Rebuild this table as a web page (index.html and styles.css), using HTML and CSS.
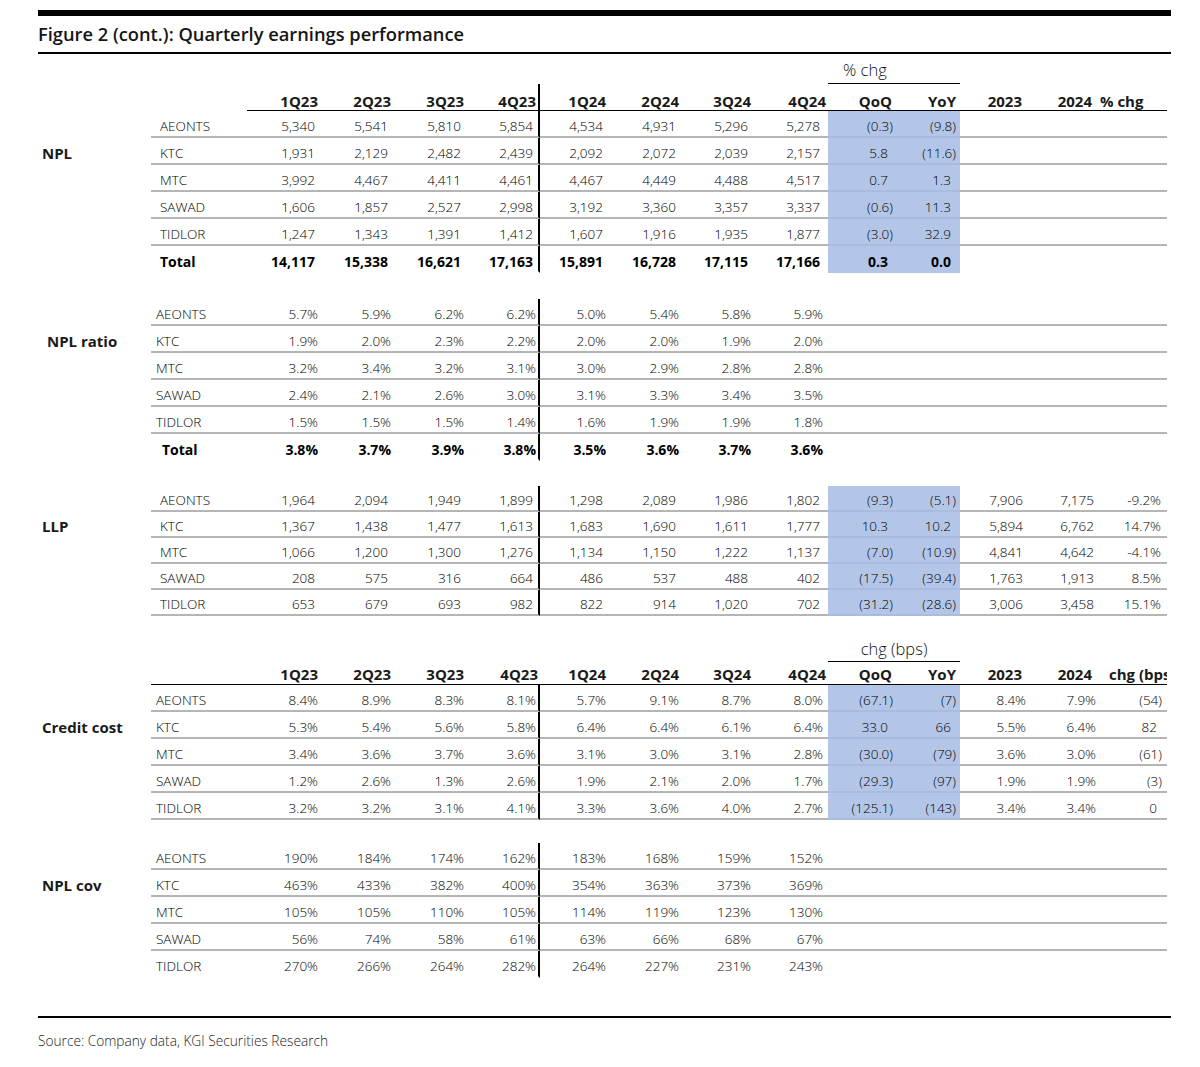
FILE: index.html
```html
<!DOCTYPE html>
<html lang="en">
<head>
<meta charset="utf-8">
<title>Figure 2 (cont.): Quarterly earnings performance</title>
<link rel="stylesheet" href="styles.css">
</head>
<body>
<div class="page">
  <div class="topbar"></div>
  <h1 class="title">Figure 2 (cont.): Quarterly earnings performance</h1>

  <section class="sec npl vsec blue">
    <div class="row sp"><span class="sup">% chg</span></div>
    <div class="row hd vh">
      <span></span><span></span><span>1Q23</span><span>2Q23</span><span>3Q23</span><span>4Q23</span><span>1Q24</span><span>2Q24</span><span>3Q24</span><span>4Q24</span><span>QoQ</span><span>YoY</span><span>2023</span><span>2024</span><span class="lc">% chg</span>
    </div>
    <div class="row d"><span></span><span>AEONTS</span><span>5,340</span><span>5,541</span><span>5,810</span><span>5,854</span><span>4,534</span><span>4,931</span><span>5,296</span><span>5,278</span><span>(0.3)</span><span>(9.8)</span><span></span><span></span><span></span></div>
    <div class="row d"><span>NPL</span><span>KTC</span><span>1,931</span><span>2,129</span><span>2,482</span><span>2,439</span><span>2,092</span><span>2,072</span><span>2,039</span><span>2,157</span><span class="po">5.8</span><span>(11.6)</span><span></span><span></span><span></span></div>
    <div class="row d"><span></span><span>MTC</span><span>3,992</span><span>4,467</span><span>4,411</span><span>4,461</span><span>4,467</span><span>4,449</span><span>4,488</span><span>4,517</span><span class="po">0.7</span><span class="po">1.3</span><span></span><span></span><span></span></div>
    <div class="row d"><span></span><span>SAWAD</span><span>1,606</span><span>1,857</span><span>2,527</span><span>2,998</span><span>3,192</span><span>3,360</span><span>3,357</span><span>3,337</span><span>(0.6)</span><span class="po">11.3</span><span></span><span></span><span></span></div>
    <div class="row d"><span></span><span>TIDLOR</span><span>1,247</span><span>1,343</span><span>1,391</span><span>1,412</span><span>1,607</span><span>1,916</span><span>1,935</span><span>1,877</span><span>(3.0)</span><span class="po">32.9</span><span></span><span></span><span></span></div>
    <div class="row d tot"><span></span><span>Total</span><span>14,117</span><span>15,338</span><span>16,621</span><span>17,163</span><span>15,891</span><span>16,728</span><span>17,115</span><span>17,166</span><span class="po">0.3</span><span class="po">0.0</span><span></span><span></span><span></span></div>
  </section>

  <section class="sec ratio vsec pct">
    <div class="row d"><span></span><span>AEONTS</span><span>5.7%</span><span>5.9%</span><span>6.2%</span><span>6.2%</span><span>5.0%</span><span>5.4%</span><span>5.8%</span><span>5.9%</span><span></span><span></span><span></span><span></span><span></span></div>
    <div class="row d"><span class="ind">NPL ratio</span><span>KTC</span><span>1.9%</span><span>2.0%</span><span>2.3%</span><span>2.2%</span><span>2.0%</span><span>2.0%</span><span>1.9%</span><span>2.0%</span><span></span><span></span><span></span><span></span><span></span></div>
    <div class="row d"><span></span><span>MTC</span><span>3.2%</span><span>3.4%</span><span>3.2%</span><span>3.1%</span><span>3.0%</span><span>2.9%</span><span>2.8%</span><span>2.8%</span><span></span><span></span><span></span><span></span><span></span></div>
    <div class="row d"><span></span><span>SAWAD</span><span>2.4%</span><span>2.1%</span><span>2.6%</span><span>3.0%</span><span>3.1%</span><span>3.3%</span><span>3.4%</span><span>3.5%</span><span></span><span></span><span></span><span></span><span></span></div>
    <div class="row d"><span></span><span>TIDLOR</span><span>1.5%</span><span>1.5%</span><span>1.5%</span><span>1.4%</span><span>1.6%</span><span>1.9%</span><span>1.9%</span><span>1.8%</span><span></span><span></span><span></span><span></span><span></span></div>
    <div class="row d tot"><span></span><span class="tind">Total</span><span>3.8%</span><span>3.7%</span><span>3.9%</span><span>3.8%</span><span>3.5%</span><span>3.6%</span><span>3.7%</span><span>3.6%</span><span></span><span></span><span></span><span></span><span></span></div>
  </section>

  <section class="sec llp vsec blue">
    <div class="row d"><span></span><span>AEONTS</span><span>1,964</span><span>2,094</span><span>1,949</span><span>1,899</span><span>1,298</span><span>2,089</span><span>1,986</span><span>1,802</span><span>(9.3)</span><span>(5.1)</span><span>7,906</span><span>7,175</span><span>-9.2%</span></div>
    <div class="row d"><span>LLP</span><span>KTC</span><span>1,367</span><span>1,438</span><span>1,477</span><span>1,613</span><span>1,683</span><span>1,690</span><span>1,611</span><span>1,777</span><span class="po">10.3</span><span class="po">10.2</span><span>5,894</span><span>6,762</span><span>14.7%</span></div>
    <div class="row d"><span></span><span>MTC</span><span>1,066</span><span>1,200</span><span>1,300</span><span>1,276</span><span>1,134</span><span>1,150</span><span>1,222</span><span>1,137</span><span>(7.0)</span><span>(10.9)</span><span>4,841</span><span>4,642</span><span>-4.1%</span></div>
    <div class="row d"><span></span><span>SAWAD</span><span>208</span><span>575</span><span>316</span><span>664</span><span>486</span><span>537</span><span>488</span><span>402</span><span>(17.5)</span><span>(39.4)</span><span>1,763</span><span>1,913</span><span>8.5%</span></div>
    <div class="row d"><span></span><span>TIDLOR</span><span>653</span><span>679</span><span>693</span><span>982</span><span>822</span><span>914</span><span>1,020</span><span>702</span><span>(31.2)</span><span>(28.6)</span><span>3,006</span><span>3,458</span><span>15.1%</span></div>
  </section>

  <section class="sec cc vsec blue pct">
    <div class="row sp"><span class="sup bps">chg (bps)</span></div>
    <div class="row hd short wide">
      <span></span><span></span><span>1Q23</span><span>2Q23</span><span>3Q23</span><span>4Q23</span><span>1Q24</span><span>2Q24</span><span>3Q24</span><span>4Q24</span><span>QoQ</span><span>YoY</span><span>2023</span><span>2024</span><span class="lc bp">chg (bps)</span>
    </div>
    <div class="row d"><span></span><span>AEONTS</span><span>8.4%</span><span>8.9%</span><span>8.3%</span><span>8.1%</span><span>5.7%</span><span>9.1%</span><span>8.7%</span><span>8.0%</span><span>(67.1)</span><span>(7)</span><span>8.4%</span><span>7.9%</span><span>(54)</span></div>
    <div class="row d"><span>Credit cost</span><span>KTC</span><span>5.3%</span><span>5.4%</span><span>5.6%</span><span>5.8%</span><span>6.4%</span><span>6.4%</span><span>6.1%</span><span>6.4%</span><span class="po">33.0</span><span class="po">66</span><span>5.5%</span><span>6.4%</span><span class="po">82</span></div>
    <div class="row d"><span></span><span>MTC</span><span>3.4%</span><span>3.6%</span><span>3.7%</span><span>3.6%</span><span>3.1%</span><span>3.0%</span><span>3.1%</span><span>2.8%</span><span>(30.0)</span><span>(79)</span><span>3.6%</span><span>3.0%</span><span>(61)</span></div>
    <div class="row d"><span></span><span>SAWAD</span><span>1.2%</span><span>2.6%</span><span>1.3%</span><span>2.6%</span><span>1.9%</span><span>2.1%</span><span>2.0%</span><span>1.7%</span><span>(29.3)</span><span>(97)</span><span>1.9%</span><span>1.9%</span><span>(3)</span></div>
    <div class="row d"><span></span><span>TIDLOR</span><span>3.2%</span><span>3.2%</span><span>3.1%</span><span>4.1%</span><span>3.3%</span><span>3.6%</span><span>4.0%</span><span>2.7%</span><span>(125.1)</span><span>(143)</span><span>3.4%</span><span>3.4%</span><span class="po">0</span></div>
  </section>

  <section class="sec cov vsec pct">
    <div class="row d"><span></span><span>AEONTS</span><span>190%</span><span>184%</span><span>174%</span><span>162%</span><span>183%</span><span>168%</span><span>159%</span><span>152%</span><span></span><span></span><span></span><span></span><span></span></div>
    <div class="row d"><span>NPL cov</span><span>KTC</span><span>463%</span><span>433%</span><span>382%</span><span>400%</span><span>354%</span><span>363%</span><span>373%</span><span>369%</span><span></span><span></span><span></span><span></span><span></span></div>
    <div class="row d"><span></span><span>MTC</span><span>105%</span><span>105%</span><span>110%</span><span>105%</span><span>114%</span><span>119%</span><span>123%</span><span>130%</span><span></span><span></span><span></span><span></span><span></span></div>
    <div class="row d"><span></span><span>SAWAD</span><span>56%</span><span>74%</span><span>58%</span><span>61%</span><span>63%</span><span>66%</span><span>68%</span><span>67%</span><span></span><span></span><span></span><span></span><span></span></div>
    <div class="row d tot plain"><span></span><span>TIDLOR</span><span>270%</span><span>266%</span><span>264%</span><span>282%</span><span>264%</span><span>227%</span><span>231%</span><span>243%</span><span></span><span></span><span></span><span></span><span></span></div>
  </section>

  <div class="rule"></div>
  <p class="src">Source: Company data, KGI Securities Research</p>
</div>
</body>
</html>
```

FILE: styles.css
```css
* { box-sizing: border-box; margin: 0; padding: 0; }

body {
  background: #fff;
  font-family: "Open Sans", "Liberation Sans", sans-serif;
  color: #222;
}

.page {
  margin-left: 38px;
  width: 1133px;
  padding-top: 10px;
}

.topbar {
  height: 6px;
  background: #000;
}

.title {
  font-size: 18.3px;
  font-weight: 600;
  line-height: 36px;
  height: 38px;
  border-bottom: 2px solid #000;
  color: #151515;
}

.sec { width: 1129px; }
.ratio { margin-top: 26px; }
.llp { margin-top: 25px; }
.cc { margin-top: 20px; }
.cov { margin-top: 23px; }

.row {
  display: grid;
  grid-template-columns: 113px 96px 73px 73px 73px 74px 68px 73px 72px 75px 67px 65px 67px 70px 70px;
}

.row > * {
  text-align: right;
  padding-right: 5px;
  font-size: 13.5px;
  font-weight: 300;
  line-height: 19px;
  white-space: nowrap;
  color: #000;
}

.row > :first-child {
  text-align: left;
  padding-left: 4px;
  font-weight: 700;
  font-size: 15px;
  color: #1a1a1a;
}

.row > :nth-child(2) {
  text-align: left;
  padding-left: 9px;
}

.ratio .row > :nth-child(2),
.cc .row > :nth-child(2),
.cov .row > :nth-child(2) { padding-left: 5px; }

.row > .ind { padding-left: 9px; }
.ratio .row > .tind { padding-left: 11px; }

/* data rows */
.d > * {
  height: 27px;
  padding-top: 6px;
}
.llp .d > * {
  height: 26px;
  padding-top: 5px;
}
.d > :not(:first-child) { border-bottom: 2px solid #b5b5b5; }

.pct .d > * { padding-right: 2px; }

.d > :nth-child(10) { padding-right: 8px; }
.pct .d > :nth-child(10) { padding-right: 5px; }
.d > :nth-child(11) { padding-right: 2px; }
.d > :nth-child(12) { padding-right: 4px; }
.d > :nth-child(13) { padding-right: 4px; }
.d > :nth-child(14) { padding-right: 3px; }
.d > :nth-child(15) { padding-right: 6px; }
.cc .d > :nth-child(13),
.cc .d > :nth-child(14) { padding-right: 1px; }
.cc .d > :nth-child(15) { padding-right: 5px; }
.d > :nth-child(11).po { padding-right: 7px; }
.d > :nth-child(12).po { padding-right: 9px; }
.d > :nth-child(15).po { padding-right: 10px; }

.vsec .d > :nth-child(6) { border-right: 2px solid #000; }

.blue .d > :nth-child(11),
.blue .d > :nth-child(12) {
  background: #b4c6e7;
  border-bottom-color: #a9bcdf;
}

.d.tot > * {
  font-weight: 700;
  font-size: 14px;
  border-bottom-color: transparent;
}
.d.tot.plain > * { font-weight: 300; font-size: 13.5px; }
.blue .d.tot > :nth-child(11),
.blue .d.tot > :nth-child(12) { border-bottom-color: #b4c6e7; }

/* header rows */
.hd > * {
  height: 27px;
  padding-top: 8px;
  padding-right: 2px;
  font-size: 15px;
  font-weight: 700;
  color: #1a1a1a;
}
.hd > :nth-child(n+3) { border-bottom: 1px solid #000; }
.hd.wide > :nth-child(2) { border-bottom: 1px solid #000; }
.hd.vh > :nth-child(6) { border-right: 2px solid #000; }
.hd > :nth-child(11) { padding-right: 3px; }
.hd > :nth-child(12) { padding-right: 4px; }
.hd > :nth-child(13),
.hd > :nth-child(14) { padding-right: 5px; }
.hd.short > * {
  height: 23px;
  padding-top: 3px;
}
.hd > .lc {
  text-align: left;
  padding-left: 3px;
  padding-right: 0;
  overflow: hidden;
}
.hd > .lc.bp { padding-left: 12px; }

/* super header */
.sp { height: 30px; }
.cc .sp { height: 26px; }
.sp > .sup {
  grid-column: 11 / 13;
  text-align: left;
  padding-left: 15px;
  padding-top: 6px;
  font-size: 16.5px;
  font-weight: 300;
  color: #111;
  border-bottom: 1px solid #000;
}
.sp > .sup.bps {
  text-align: center;
  padding-left: 0;
  padding-right: 0;
  padding-top: 3px;
}

.rule {
  margin-top: 38px;
  height: 2px;
  background: #000;
}

.src {
  margin-top: 15px;
  font-size: 13.7px;
  line-height: 16px;
  font-weight: 300;
  color: #222;
}
```
